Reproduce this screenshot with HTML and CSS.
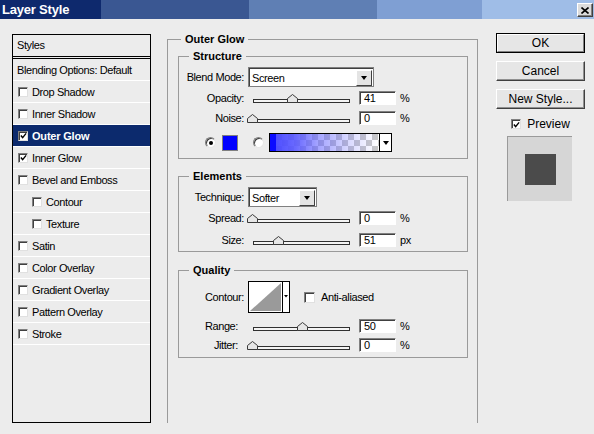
FILE: index.html
```html
<!DOCTYPE html>
<html>
<head>
<meta charset="utf-8">
<link rel="stylesheet" href="styles.css">
</head>
<body>
<div class="window">
  <div class="titlebar">
    <span class="title">Layer Style</span>
    <span class="close"><svg width="8" height="7" viewBox="0 0 8 7"><path d="M0.5 0.5 L7.5 6.5 M7.5 0.5 L0.5 6.5" stroke="#000" stroke-width="1.6"/></svg></span>
  </div>
  <div class="content">
    <div class="styles-panel">
      <div class="panel-head">Styles</div>
      <div class="srow plain">Blending Options: Default</div>
      <div class="srow"><span class="cb"></span>Drop Shadow</div>
      <div class="srow"><span class="cb"></span>Inner Shadow</div>
      <div class="srow selected"><span class="cb on"><svg width="8" height="8" viewBox="0 0 8 8"><path d="M1 3.5 L3 5.8 L7 1" fill="none" stroke="#000" stroke-width="1.6"/></svg></span>Outer Glow</div>
      <div class="srow"><span class="cb on"><svg width="8" height="8" viewBox="0 0 8 8"><path d="M1 3.5 L3 5.8 L7 1" fill="none" stroke="#000" stroke-width="1.6"/></svg></span>Inner Glow</div>
      <div class="srow"><span class="cb"></span>Bevel and Emboss</div>
      <div class="srow indent"><span class="cb"></span>Contour</div>
      <div class="srow indent"><span class="cb"></span>Texture</div>
      <div class="srow"><span class="cb"></span>Satin</div>
      <div class="srow"><span class="cb"></span>Color Overlay</div>
      <div class="srow"><span class="cb"></span>Gradient Overlay</div>
      <div class="srow"><span class="cb"></span>Pattern Overlay</div>
      <div class="srow"><span class="cb"></span>Stroke</div>
    </div>

    <fieldset class="group main">
      <legend>Outer Glow</legend>

      <fieldset class="group sub structure">
        <legend>Structure</legend>
        <div class="frow first">
          <span class="lbl">Blend Mode:</span>
          <div class="select blend"><span class="val">Screen</span><span class="arrow"><i></i></span></div>
        </div>
        <div class="frow r-opacity">
          <span class="lbl">Opacity:</span>
          <div class="slider"><div class="track"></div><svg class="thumb" style="left:40px" width="11" height="9" viewBox="0 0 11 9"><path d="M0.5 8.5 L0.5 4.5 L5.5 0.5 L10.5 4.5 L10.5 8.5 Z" fill="#e6e6e6" stroke="#3a3a3a"/></svg></div>
          <div class="num">41</div><span class="unit">%</span>
        </div>
        <div class="frow r-noise">
          <span class="lbl">Noise:</span>
          <div class="slider"><div class="track"></div><svg class="thumb" style="left:0px" width="11" height="9" viewBox="0 0 11 9"><path d="M0.5 8.5 L0.5 4.5 L5.5 0.5 L10.5 4.5 L10.5 8.5 Z" fill="#e6e6e6" stroke="#3a3a3a"/></svg></div>
          <div class="num">0</div><span class="unit">%</span>
        </div>
        <div class="frow r-color">
          <span class="radio on"></span>
          <span class="swatch"></span>
          <span class="radio second"></span>
          <div class="gradient"><span class="grad-fill"></span><span class="grad-arrow"><i></i></span></div>
        </div>
      </fieldset>

      <fieldset class="group sub elements">
        <legend>Elements</legend>
        <div class="frow first">
          <span class="lbl">Technique:</span>
          <div class="select technique"><span class="val">Softer</span><span class="arrow"><i></i></span></div>
        </div>
        <div class="frow r-spread">
          <span class="lbl">Spread:</span>
          <div class="slider"><div class="track"></div><svg class="thumb" style="left:0px" width="11" height="9" viewBox="0 0 11 9"><path d="M0.5 8.5 L0.5 4.5 L5.5 0.5 L10.5 4.5 L10.5 8.5 Z" fill="#e6e6e6" stroke="#3a3a3a"/></svg></div>
          <div class="num">0</div><span class="unit">%</span>
        </div>
        <div class="frow r-size">
          <span class="lbl">Size:</span>
          <div class="slider"><div class="track"></div><svg class="thumb" style="left:26px" width="11" height="9" viewBox="0 0 11 9"><path d="M0.5 8.5 L0.5 4.5 L5.5 0.5 L10.5 4.5 L10.5 8.5 Z" fill="#e6e6e6" stroke="#3a3a3a"/></svg></div>
          <div class="num">51</div><span class="unit">px</span>
        </div>
      </fieldset>

      <fieldset class="group sub quality">
        <legend>Quality</legend>
        <div class="frow first">
          <span class="lbl">Contour:</span>
          <span class="contour"><svg width="42" height="32" viewBox="0 0 42 32"><rect x="0.5" y="0.5" width="41" height="31" fill="#fff" stroke="#000"/><path d="M2 30 L33 2 L33 30 Z" fill="#9a9a9a"/><path d="M34.5 1 L34.5 31" stroke="#000"/><path d="M36 14 L40 14 L38 16.5 Z" fill="#000"/></svg></span>
          <span class="cb aa"></span><span class="aa-label">Anti-aliased</span>
        </div>
        <div class="frow r-range">
          <span class="lbl narrow">Range:</span>
          <div class="slider"><div class="track"></div><svg class="thumb" style="left:50px" width="11" height="9" viewBox="0 0 11 9"><path d="M0.5 8.5 L0.5 4.5 L5.5 0.5 L10.5 4.5 L10.5 8.5 Z" fill="#e6e6e6" stroke="#3a3a3a"/></svg></div>
          <div class="num">50</div><span class="unit">%</span>
        </div>
        <div class="frow r-jitter">
          <span class="lbl narrow">Jitter:</span>
          <div class="slider"><div class="track"></div><svg class="thumb" style="left:0px" width="11" height="9" viewBox="0 0 11 9"><path d="M0.5 8.5 L0.5 4.5 L5.5 0.5 L10.5 4.5 L10.5 8.5 Z" fill="#e6e6e6" stroke="#3a3a3a"/></svg></div>
          <div class="num">0</div><span class="unit">%</span>
        </div>
      </fieldset>
    </fieldset>

    <div class="actions">
      <div class="btn default"><span>OK</span></div>
      <div class="btn">Cancel</div>
      <div class="btn">New Style...</div>
      <div class="preview-row"><span class="cb on"><svg width="8" height="8" viewBox="0 0 8 8"><path d="M1 3.5 L3 5.8 L7 1" fill="none" stroke="#000" stroke-width="1.6"/></svg></span><span>Preview</span></div>
      <div class="preview"><div class="preview-square"></div></div>
    </div>
  </div>
</div>
</body>
</html>
```

FILE: styles.css
```css
* { box-sizing: border-box; }
html, body { margin: 0; padding: 0; }
body {
  width: 594px;
  height: 434px;
  overflow: hidden;
  background: #ececec;
  font-family: "Liberation Sans", Arial, sans-serif;
  font-size: 11px;
  letter-spacing: -0.4px;
  color: #000;
}
.window { width: 594px; height: 434px; }

.titlebar {
  height: 19px;
  display: flex;
  align-items: center;
  justify-content: space-between;
  padding: 0 1px 0 2px;
  background: linear-gradient(to right,
    #0e296d 0, #0e296d 101px,
    #3a5792 101px, #3a5792 249px,
    #5f7fb4 249px, #5f7fb4 377px,
    #7f9fd3 377px, #7f9fd3 482px,
    #9fbde7 482px, #9fbde7 594px);
}
.title {
  color: #fff;
  font-weight: bold;
  font-size: 13px;
  letter-spacing: -0.2px;
  line-height: 19px;
}
.close {
  width: 16px;
  height: 14px;
  margin-top: 1px;
  background: #dcdcdc;
  border: 1px solid;
  border-color: #fff #404040 #404040 #fff;
  box-shadow: inset -1px -1px 0 #808080;
  display: flex;
  align-items: center;
  justify-content: center;
}
.close svg { display: block; }

.content {
  display: flex;
  align-items: flex-start;
  padding-left: 12px;
}

/* Styles list */
.styles-panel {
  margin-top: 15px;
  width: 139px;
  height: 389px;
  border: 1px solid #000;
}
.panel-head {
  height: 24px;
  line-height: 21px;
  padding-left: 4px;
  border-bottom: 3px double #000;
}
.srow {
  height: 22px;
  border-bottom: 1px solid #fff;
  display: flex;
  align-items: center;
  padding-left: 5px;
  white-space: nowrap;
}
.srow.plain { padding-left: 4px; }
.srow.indent { padding-left: 19px; }
.srow.selected {
  background: #0c2a6d;
  color: #fff;
  font-weight: bold;
  letter-spacing: -0.2px;
}
.cb {
  width: 10px;
  height: 10px;
  flex: none;
  margin-right: 4px;
  background: #fff;
  border: 1px solid;
  border-color: #808080 #e0e0e0 #e0e0e0 #808080;
  box-shadow: inset 1px 1px 0 #404040;
  display: inline-flex;
  align-items: center;
  justify-content: center;
}
.cb svg { display: block; margin: 1px 0 0 1px; }

/* Group boxes */
fieldset.group {
  margin: 0;
  min-width: 0;
  border: 1px solid #9a9a9a;
  padding: 0;
}
fieldset.group > legend {
  font-weight: bold;
  letter-spacing: 0;
  line-height: 13px;
  padding: 0 4px;
}
fieldset.main {
  margin-top: 14px;
  margin-left: 16px;
  width: 311px;
  height: 390px;
  border-bottom: none;
  padding: 0 10px;
}
fieldset.main > legend { margin-left: 3px; }
fieldset.sub { width: 290px; }
fieldset.sub > legend { margin-left: 10px; }
fieldset.structure { margin-top: 4px; padding: 4px 0 6px; }
fieldset.elements { margin-top: 11px; padding: 4px 0 4px; }
fieldset.quality { margin-top: 12px; padding: 4px 0 5px; }

.frow {
  display: flex;
  align-items: center;
  white-space: nowrap;
}
.r-opacity { margin-top: 4px; }
.r-noise { margin-top: 6px; }
.r-color { margin-top: 8px; padding-left: 26px; }
.r-spread { margin-top: 4px; }
.r-size { margin-top: 8px; }
.r-range { margin-top: 6px; }
.r-jitter { margin-top: 5px; }

.lbl {
  width: 65px;
  text-align: right;
  flex: none;
}
.lbl.narrow { padding-right: 6px; }

.select {
  margin-left: 4px;
  height: 20px;
  background: #fff;
  border: 1px solid #808080;
  box-shadow: inset 1px 1px 0 #404040;
  display: flex;
  align-items: center;
  justify-content: space-between;
  padding: 2px 1px 1px 3px;
}
.select.blend { width: 126px; }
.select.technique { width: 69px; }
.select .val { line-height: 14px; }
.select .arrow {
  width: 16px;
  height: 16px;
  background: #e4e4e4;
  border: 1px solid;
  border-color: #fff #404040 #404040 #fff;
  display: flex;
  align-items: center;
  justify-content: center;
}
.arrow i, .grad-arrow i {
  display: block;
  width: 0;
  height: 0;
  border-left: 3px solid transparent;
  border-right: 3px solid transparent;
  border-top: 4px solid #000;
}

.slider {
  position: relative;
  width: 108px;
  height: 14px;
  margin-left: 3px;
  flex: none;
}
.track {
  position: absolute;
  left: 6px;
  top: 8px;
  width: 97px;
  height: 4px;
  background: #f4f4f4;
  border: 1px solid #303030;
}
.thumb {
  position: absolute;
  top: 3px;
  display: block;
}
.num {
  width: 37px;
  height: 14px;
  margin-left: 4px;
  background: #fff;
  border: 1px solid;
  border-color: #808080 #fff #fff #808080;
  box-shadow: inset 1px 1px 0 #404040;
  padding-left: 4px;
  line-height: 12px;
  flex: none;
}
.unit { margin-left: 4px; }

.radio {
  width: 11px;
  height: 11px;
  border-radius: 50%;
  background: #fff;
  border: 1px solid;
  border-color: #808080 #e8e8e8 #e8e8e8 #808080;
  box-shadow: inset 1px 1px 0 #404040;
  display: inline-flex;
  align-items: center;
  justify-content: center;
  flex: none;
}
.radio.on::after {
  content: "";
  width: 4px;
  height: 4px;
  border-radius: 50%;
  background: #000;
  margin: 1px 0 0 1px;
}
.radio.second { margin-left: 15px; }
.swatch {
  width: 16px;
  height: 16px;
  margin-left: 6px;
  background: #0000ff;
  border: 1px solid #808080;
  flex: none;
}
.gradient {
  width: 123px;
  height: 19px;
  margin-left: 5px;
  border: 1px solid #000;
  display: flex;
}
.grad-fill {
  flex: 1;
  background:
    linear-gradient(to right, #0a0aff 0, #0a0aff 6px, rgba(70,70,255,0.95) 6px, rgba(90,90,255,0.9) 26px, rgba(90,90,255,0.55) 48px, rgba(110,110,255,0.25) 80px, rgba(140,140,255,0) 108px),
    repeating-conic-gradient(#c8c8c8 0 25%, #ffffff 0 50%) 0 0 / 12px 12px;
}
.grad-arrow {
  width: 12px;
  background: #fff;
  border-left: 1px solid #000;
  display: flex;
  align-items: center;
  justify-content: center;
}

.contour {
  margin-left: 4px;
  display: block;
  height: 32px;
}
.contour svg { display: block; }
.cb.aa { margin-left: 14px; margin-right: 6px; width: 11px; height: 11px; }

/* Right column */
.actions {
  margin-left: 18px;
  margin-top: 14px;
  width: 89px;
  display: flex;
  flex-direction: column;
  font-size: 12px;
  letter-spacing: 0;
}
.btn {
  height: 20px;
  margin-bottom: 8px;
  background: #e6e6e6;
  border: 1px solid;
  border-color: #fff #404040 #404040 #fff;
  box-shadow: inset -1px -1px 0 #909090;
  display: flex;
  align-items: center;
  justify-content: center;
}
.btn.default {
  border: 1px solid #000;
  box-shadow: none;
  padding: 0;
}
.btn.default span {
  width: 100%;
  height: 100%;
  display: flex;
  align-items: center;
  justify-content: center;
  border: 1px solid;
  border-color: #fff #808080 #808080 #fff;
}
.preview-row {
  display: flex;
  align-items: center;
  justify-content: center;
  height: 14px;
  margin-top: 0;
}
.preview-row .cb { margin-right: 6px; }
.preview {
  margin-top: 5px;
  margin-left: 11px;
  width: 65px;
  height: 65px;
  background: #d6d6d6;
  border-top: 1px solid #9a9a9a;
  border-left: 1px solid #9a9a9a;
  display: flex;
  align-items: center;
  justify-content: center;
}
.preview-square {
  width: 31px;
  height: 31px;
  background: #4b4b4b;
  margin: 1px 0 0 1px;
}
```
